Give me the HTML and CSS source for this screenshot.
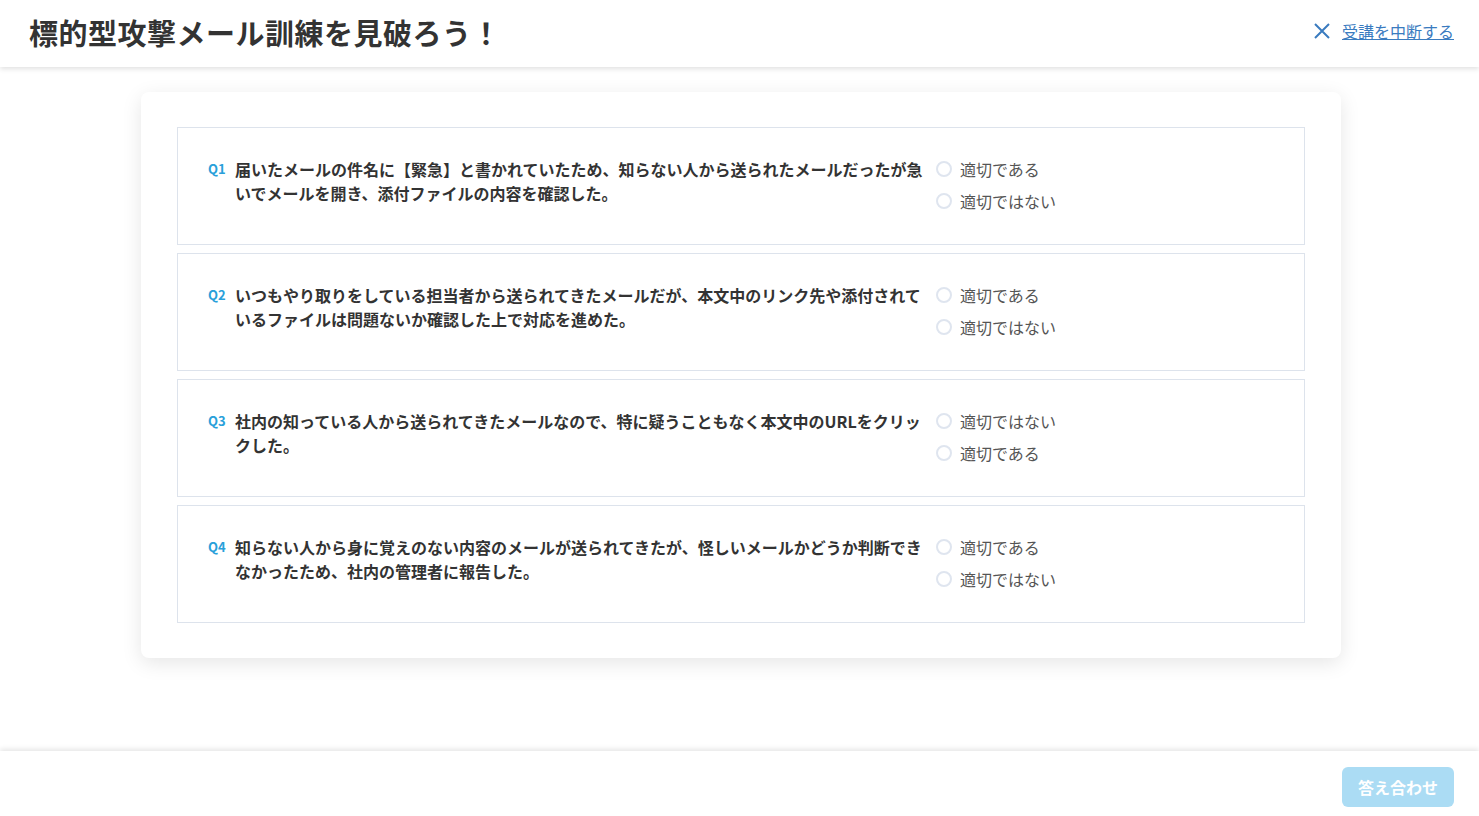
FILE: index.html
```html
<!DOCTYPE html>
<html lang="ja">
	<head>
		<title>標的型攻撃メール訓練を見破ろう！</title>
		<link rel="stylesheet" href="styles.css">
	</head>
	<body>
		<div id="header">
			<h1>標的型攻撃メール訓練を見破ろう！</h1>
			<a id="quit" href="#">
				<svg width="18" height="18" viewBox="0 0 18 18"><path d="M2 2L16 16M16 2L2 16" stroke="#3a7bbf" stroke-width="2" fill="none"/></svg>
				<span>受講を中断する</span>
			</a>
		</div>
		<div id="main">
			<div class="card">
				<div class="question">
					<div class="qtext"><span class="qno">Q1</span><span class="qbody">届いたメールの件名に【緊急】と書かれていたため、知らない人から送られたメールだったが急いでメールを開き、添付ファイルの内容を確認した。</span></div>
					<div class="choices">
						<label class="choice"><span class="radio"></span>適切である</label>
						<label class="choice"><span class="radio"></span>適切ではない</label>
					</div>
				</div>
				<div class="question">
					<div class="qtext"><span class="qno">Q2</span><span class="qbody">いつもやり取りをしている担当者から送られてきたメールだが、本文中のリンク先や添付されているファイルは問題ないか確認した上で対応を進めた。</span></div>
					<div class="choices">
						<label class="choice"><span class="radio"></span>適切である</label>
						<label class="choice"><span class="radio"></span>適切ではない</label>
					</div>
				</div>
				<div class="question">
					<div class="qtext"><span class="qno">Q3</span><span class="qbody">社内の知っている人から送られてきたメールなので、特に疑うこともなく本文中のURLをクリックした。</span></div>
					<div class="choices">
						<label class="choice"><span class="radio"></span>適切ではない</label>
						<label class="choice"><span class="radio"></span>適切である</label>
					</div>
				</div>
				<div class="question">
					<div class="qtext"><span class="qno">Q4</span><span class="qbody">知らない人から身に覚えのない内容のメールが送られてきたが、怪しいメールかどうか判断できなかったため、社内の管理者に報告した。</span></div>
					<div class="choices">
						<label class="choice"><span class="radio"></span>適切である</label>
						<label class="choice"><span class="radio"></span>適切ではない</label>
					</div>
				</div>
			</div>
		</div>
		<div id="footer">
			<span class="btn disabled">答え合わせ</span>
		</div>
	</body>
</html>
```

FILE: styles.css
```css
body, html {margin:0;padding:0;font-family:"Noto Sans CJK JP","Noto Sans",sans-serif;color:#333;background:#fff;}
body {height:816px;position:relative;overflow:hidden;}
#header {height:63px;display:flex;align-items:center;justify-content:space-between;padding:0 25px 4px 29px;box-shadow:0 2px 5px rgba(0,0,0,0.12);position:relative;z-index:1;}
h1 {margin:0;font-size:29px;font-weight:bold;color:#333;letter-spacing:0.5px;}
#quit {display:flex;align-items:center;gap:11px;color:#3a7bbf;font-size:16px;text-decoration:underline;margin-top:-2px;}
#quit svg {margin-top:1px;}
#main {padding:25px 0 0 141px;}
.card {width:1128px;padding:35px 36px;background:#fff;border-radius:8px;box-shadow:0 5px 20px rgba(0,0,0,0.1);display:flex;flex-direction:column;gap:8px;}
.question {border:1px solid #dde3ec;height:116px;padding:0 30px;display:flex;align-items:flex-start;box-sizing:content-box;}
.qtext {width:720px;padding-top:29px;display:flex;}
.qno {color:#29a0da;font-weight:bold;font-size:13px;width:27px;flex-shrink:0;line-height:24px;}
.qbody {font-size:16px;font-weight:bold;line-height:24px;width:690px;}
.choices {padding-top:25px;margin-left:8px;}
.choice {display:flex;align-items:center;height:32px;font-size:16px;color:#555;}
.radio {width:12px;height:12px;border:2px solid #dfe5ef;border-radius:50%;margin-right:8px;}
#footer {position:absolute;left:0;right:0;bottom:0;height:49px;display:flex;align-items:flex-start;justify-content:flex-end;padding:16px 25px 0 0;box-shadow:0 -2px 5px rgba(0,0,0,0.1);background:#fff;}
.btn {padding:0 16px;height:40px;line-height:40px;border-radius:6px;color:#fff;font-weight:bold;font-size:16px;background:#2c9fe0;}
.btn.disabled {background:#abdcf4;}
```
